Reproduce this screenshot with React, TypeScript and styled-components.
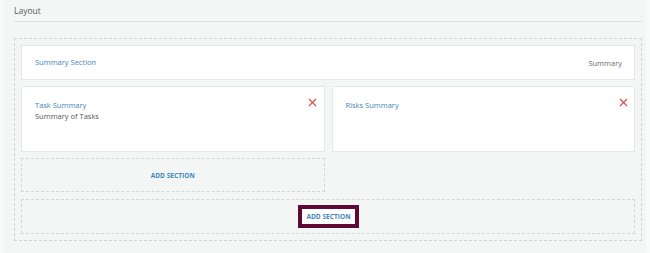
import React from "react";
import styled, { createGlobalStyle } from "styled-components";

const Global = createGlobalStyle`
  html, body { margin: 0; padding: 0; background: #f9fafa; }
  body { font-family: "Open Sans", "Noto Sans", sans-serif; }
`;

const Panel = styled.div`
  margin: 0 4px;
  min-height: 253px;
  background: #f4f6f6;
  padding: 0 4px 0 10px;
  box-sizing: border-box;
  overflow: hidden;
`;

const Header = styled.div`
  height: 22px;
  border-bottom: 1px solid #dcdfdf;
  font-size: 8.5px;
  color: #5a5a5a;
  display: flex;
  align-items: center;
  box-sizing: border-box;
`;

const Dropzone = styled.div`
  margin-top: 16px;
  border: 1px dashed #cfd3d3;
  padding: 6px;
  display: flex;
  flex-direction: column;
  gap: 6px;
  width: 628px;
  box-sizing: border-box;
`;

const Card = styled.div<{ $h: number }>`
  height: ${(p) => p.$h}px;
  background: #fff;
  border: 1px solid #e6e8e8;
  box-sizing: border-box;
  padding: 0 12px 0 13px;
  position: relative;
`;

const RowCard = styled(Card)`
  display: flex;
  align-items: center;
  justify-content: space-between;
`;

const Title = styled.div`
  font-size: 7.5px;
  color: #3f86bd;
  line-height: 11px;
`;

const Sub = styled.div`
  font-size: 7.5px;
  color: #555;
  line-height: 11px;
`;

const Meta = styled.div`
  font-size: 7.5px;
  color: #6a6a6a;
`;

const Grid = styled.div`
  display: grid;
  grid-template-columns: 1fr 1fr;
  column-gap: 7px;
  row-gap: 6px;
`;

const SectionCard = styled(Card)`
  padding-top: 13px;
`;

const Remove = styled.span`
  position: absolute;
  top: 10px;
  right: 6px;
  width: 10px;
  height: 10px;
  display: flex;
  align-items: center;
  justify-content: center;
`;

const AddBox = styled.div<{ $h: number; $mt?: number }>`
  height: ${(p) => p.$h}px;
  margin-top: ${(p) => p.$mt ?? 0}px;
  border: 1px dashed #d3d7d7;
  background: #f4f6f6;
  box-sizing: border-box;
  display: flex;
  align-items: center;
  justify-content: center;
`;

const AddText = styled.span`
  font-size: 6.5px;
  font-weight: 700;
  color: #3f86bd;
  letter-spacing: 0.05px;
`;

const AddButton = styled.button`
  width: 61px;
  height: 23px;
  background: #fff;
  border: 4px solid #5e0a35;
  box-sizing: border-box;
  padding: 0;
  font-family: inherit;
  display: flex;
  align-items: center;
  justify-content: center;
  margin-left: 1px;
`;

const XIcon = () => (
  <svg width="9" height="9" viewBox="0 0 9 9">
    <path d="M1 1L8 8M8 1L1 8" stroke="#d9534f" strokeWidth="1.3" />
  </svg>
);

export default function App() {
  return (
    <>
      <Global />
      <Panel>
        <Header>Layout</Header>
        <Dropzone>
          <RowCard $h={35}>
            <Title>Summary Section</Title>
            <Meta>Summary</Meta>
          </RowCard>
          <Grid>
            <SectionCard $h={66}>
              <Title>Task Summary</Title>
              <Sub>Summary of Tasks</Sub>
              <Remove><XIcon /></Remove>
            </SectionCard>
            <SectionCard $h={66}>
              <Title>Risks Summary</Title>
              <Remove><XIcon /></Remove>
            </SectionCard>
            <AddBox $h={34}>
              <AddText>ADD SECTION</AddText>
            </AddBox>
          </Grid>
          <AddBox $h={35} $mt={1}>
            <AddButton>
              <AddText>ADD SECTION</AddText>
            </AddButton>
          </AddBox>
        </Dropzone>
      </Panel>
    </>
  );
}
